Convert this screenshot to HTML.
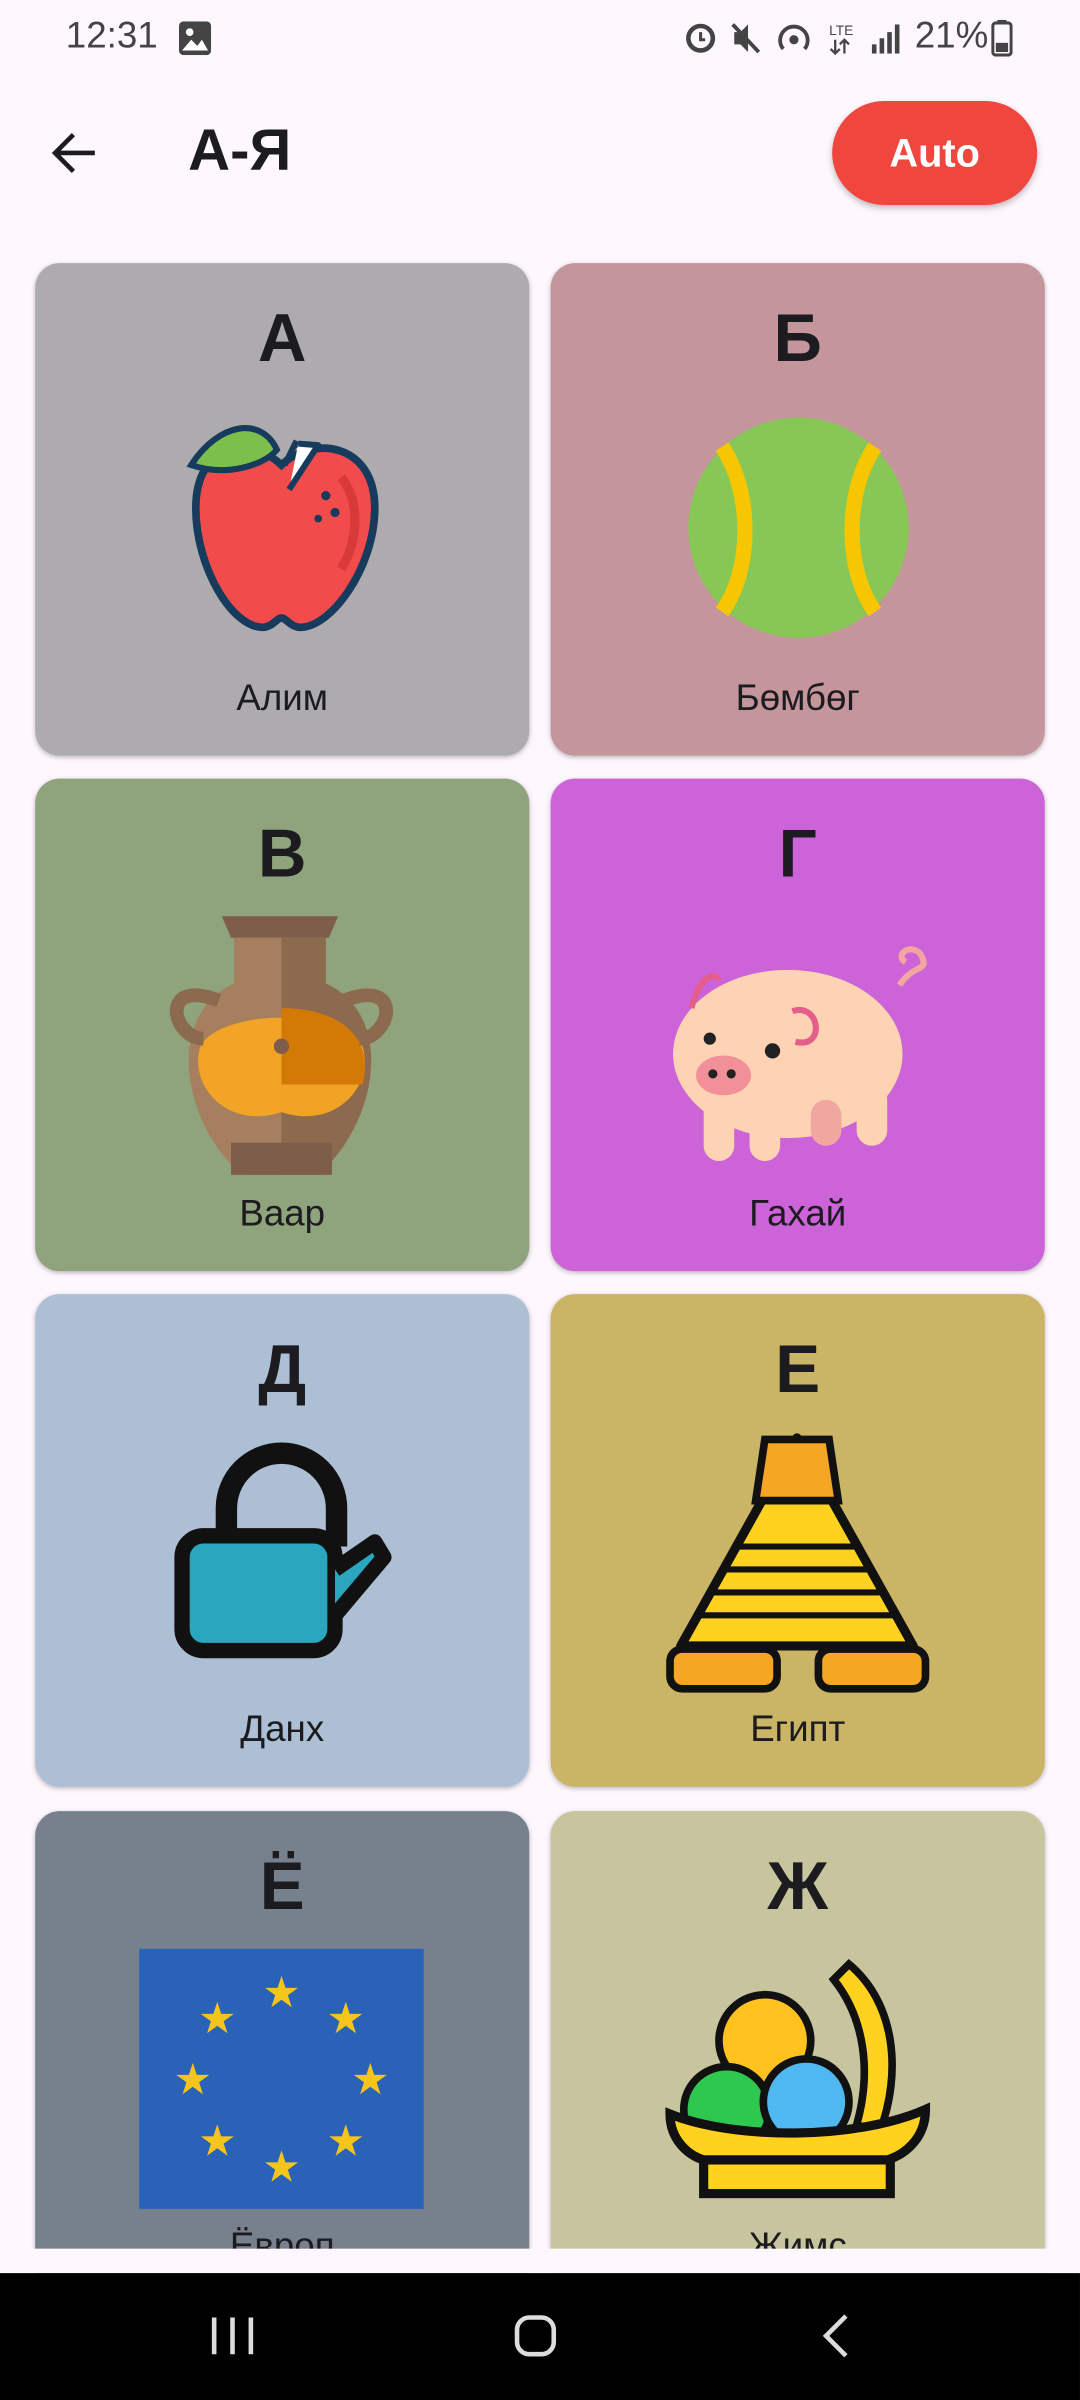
<!DOCTYPE html>
<html><head><meta charset="utf-8"><style>
html,body{margin:0;padding:0;width:1080px;height:2400px;overflow:hidden;background:#FEF7FE;font-family:"Liberation Sans",sans-serif;}
#w{position:absolute;left:0;top:0;width:706px;height:1569px;transform:scale(1.5297);transform-origin:0 0;}
.a{position:absolute;}
.card{position:absolute;width:323px;height:322px;border-radius:16px;box-shadow:0 1px 3px rgba(0,0,0,.25);overflow:hidden;}
.L{position:absolute;left:0;right:0;top:24px;text-align:center;font-weight:bold;font-size:44px;color:#1c1b1f;line-height:52px;}
.N{position:absolute;left:0;right:0;top:270px;text-align:center;font-size:24px;color:#1c1b1f;line-height:30px;}
.card svg{position:absolute;left:0;top:0;}
</style></head><body><div id="w">
<div class="a" style="left:43px;top:10px;font-size:24px;color:#444;">12:31</div>
<svg class="a" style="left:117px;top:14px" width="21" height="22"><rect x="0" y="0" width="21" height="22" rx="3" fill="#444"/><circle cx="7" cy="7" r="2.5" fill="#fff"/><path d="M2 19 L8 12 L12 16 L15 12 L19 19Z" fill="#fff"/></svg>
<svg class="a" style="left:446px;top:12px" width="150" height="26"><g fill="#444" stroke="#444"><circle cx="12" cy="13" r="8" fill="none" stroke-width="3"/><path d="M12 9v5h3" fill="none" stroke-width="2"/><path d="M34 9h4l5-5v18l-5-5h-4z" stroke="none"/><line x1="33" y1="4" x2="50" y2="22" stroke-width="2.5"/><circle cx="73" cy="14" r="3" stroke="none"/><path d="M66 20a9 9 0 1 1 14 0" fill="none" stroke-width="2.5"/><text x="96" y="11" font-size="9" stroke="none" font-family="Liberation Sans">LTE</text><path d="M100 14v9M97 20l3 3 3-3M106 23v-9M103 17l3-3 3 3" fill="none" stroke-width="1.5"/><rect x="124" y="17" width="3" height="6" stroke="none"/><rect x="129" y="13" width="3" height="10" stroke="none"/><rect x="134" y="9" width="3" height="14" stroke="none"/><rect x="139" y="4" width="3" height="19" stroke="none"/></g></svg>
<div class="a" style="left:598px;top:10px;font-size:24px;color:#444;">21%</div>
<svg class="a" style="left:648px;top:13px" width="14" height="24"><rect x="1" y="2" width="12" height="21" rx="2" fill="none" stroke="#444" stroke-width="2"/><rect x="4" y="0" width="6" height="3" fill="#444"/><rect x="3" y="15" width="8" height="6" fill="#444"/></svg>
<svg class="a" style="left:32px;top:86px" width="32" height="28"><path d="M30 14H4M16 2L4 14L16 26" fill="none" stroke="#1c1b1f" stroke-width="3"/></svg>
<div class="a" style="left:123px;top:78px;font-size:38px;font-weight:bold;color:#1c1b1f;">А-Я</div>
<div class="a" style="left:544px;top:66px;width:134px;height:68px;border-radius:34px;background:#EF463D;color:#fff;font-size:26px;font-weight:bold;text-align:center;line-height:68px;box-shadow:0 2px 4px rgba(0,0,0,.25)">Auto</div>

<div class="card" style="left:23px;top:172px;background:#AEABAE"><div class="L">А</div><div class="N">Алим</div>
<svg width="323" height="322"><path d="M161 132 C140 112 105 118 105 160 C105 200 130 240 150 238 C156 237 158 232 161 232 C164 232 166 237 172 238 C192 240 222 200 222 160 C222 118 182 112 161 132Z" fill="#F24B4B" stroke="#173B5C" stroke-width="5"/><path d="M200 140 C212 155 212 180 200 200" fill="none" stroke="#D83A3A" stroke-width="6"/><path d="M163 132 L170 118 L178 122" fill="none" stroke="#173B5C" stroke-width="4"/><path d="M172 118 L185 119 L166 148" fill="#fff" stroke="#173B5C" stroke-width="4" stroke-linejoin="round"/><path d="M158 130 C148 108 120 112 102 140 C125 148 150 140 158 130Z" transform="translate(0,-8)" fill="#7CC04B" stroke="#173B5C" stroke-width="4"/><circle cx="190" cy="152" r="3" fill="#173B5C"/><circle cx="196" cy="163" r="3" fill="#173B5C"/><circle cx="185" cy="167" r="2.5" fill="#173B5C"/></svg></div>

<div class="card" style="left:360px;top:172px;background:#C4959A"><div class="L">Б</div><div class="N">Бөмбөг</div>
<svg width="323" height="322"><circle cx="162" cy="173" r="72" fill="#86C755"/><path d="M112 120 C132 150 132 200 112 228" fill="none" stroke="#F6C600" stroke-width="10"/><path d="M212 120 C192 150 192 200 212 228" fill="none" stroke="#F6C600" stroke-width="10"/></svg></div>

<div class="card" style="left:23px;top:509px;background:#8FA37C"><div class="L">В</div><div class="N">Ваар</div>
<svg width="323" height="322"><path d="M122 90 h76 l-6 14 h-64z" fill="#7E5E4A"/><path d="M130 104 h60 v30 c45 20 35 90 -5 125 h-50 c-40 -35 -50 -105 -5 -125z" fill="#A67F5E"/><path d="M161 104 h29 v30 c45 20 35 90 -5 125 h-24z" fill="#8C6A4E"/><path d="M108 175 C100 200 125 230 161 218 C197 230 222 200 214 175 C200 150 122 150 108 175Z" fill="#F5A623" opacity=".95"/><path d="M161 150 C200 150 222 170 214 200 L161 200Z" fill="#D37A06"/><path d="M120 145 C80 130 90 170 110 170" fill="none" stroke="#8C6A4E" stroke-width="9"/><path d="M202 145 C242 130 232 170 212 170" fill="none" stroke="#8C6A4E" stroke-width="9"/><rect x="128" y="238" width="66" height="21" fill="#7E5E4A"/><circle cx="161" cy="175" r="5" fill="#7E5E4A"/></svg></div>

<div class="card" style="left:360px;top:509px;background:#CC63D8"><div class="L">Г</div><div class="N">Гахай</div>
<svg width="323" height="322"><ellipse cx="155" cy="180" rx="75" ry="55" fill="#FDD3B4"/><rect x="100" y="200" width="20" height="50" rx="10" fill="#FDD3B4"/><rect x="130" y="210" width="20" height="40" rx="10" fill="#FDD3B4"/><rect x="170" y="210" width="20" height="30" rx="10" fill="#F2A6A0"/><rect x="200" y="200" width="20" height="40" rx="10" fill="#FDD3B4"/><ellipse cx="113" cy="194" rx="18" ry="13" fill="#F2909A"/><circle cx="106" cy="193" r="3" fill="#222"/><circle cx="118" cy="193" r="3" fill="#222"/><circle cx="145" cy="178" r="5" fill="#222"/><circle cx="104" cy="170" r="4" fill="#222"/><path d="M158 152 c18 -6 22 25 2 20" fill="none" stroke="#E35E8A" stroke-width="4"/><path d="M92 150 c5 -20 15 -25 18 -18" fill="none" stroke="#E35E8A" stroke-width="4"/><path d="M228 135 c10 -15 20 -8 14 -20 c-6 -8 -18 0 -10 5" fill="none" stroke="#F2A6A0" stroke-width="4"/></svg></div>

<div class="card" style="left:23px;top:846px;background:#ADBFD4"><div class="L">Д</div><div class="N">Данх</div>
<svg width="323" height="322"><path d="M125 165 v-25 a36 36 0 0 1 72 0 v25" fill="none" stroke="#111" stroke-width="14"/><rect x="96" y="158" width="100" height="75" rx="14" fill="#2AA6BE" stroke="#111" stroke-width="10"/><path d="M196 180 L222 162 L228 172 L196 210" fill="#2AA6BE" stroke="#111" stroke-width="10" stroke-linejoin="round"/></svg></div>

<div class="card" style="left:360px;top:846px;background:#CAB466"><div class="L">Е</div><div class="N">Египт</div>
<svg width="323" height="322"><path d="M161 94 L237 230 H85Z" fill="#FFD21F" stroke="#111" stroke-width="6" stroke-linejoin="round"/><path d="M140 95 h42 l6 40 h-54z" fill="#F5A623" stroke="#111" stroke-width="5"/><g stroke="#111" stroke-width="4"><line x1="120" y1="165" x2="200" y2="165"/><line x1="112" y1="180" x2="210" y2="180"/><line x1="104" y1="195" x2="218" y2="195"/><line x1="96" y1="210" x2="228" y2="210"/></g><rect x="78" y="232" width="70" height="26" rx="8" fill="#F5A623" stroke="#111" stroke-width="5"/><rect x="175" y="232" width="70" height="26" rx="8" fill="#F5A623" stroke="#111" stroke-width="5"/></svg></div>

<div class="card" style="left:23px;top:1184px;background:#77818E"><div class="L">Ё</div><div class="N">Ёвроп</div>
<svg width="323" height="322"><rect x="68" y="90" width="186" height="170" fill="#2A62B8"/><g fill="#F6C51C" font-size="28" text-anchor="middle"><text x="161" y="128">★</text><text x="203" y="145">★</text><text x="219" y="185">★</text><text x="203" y="225">★</text><text x="161" y="242">★</text><text x="119" y="225">★</text><text x="103" y="185">★</text><text x="119" y="145">★</text></g></svg></div>

<div class="card" style="left:360px;top:1184px;background:#C7C59D"><div class="L">Ж</div><div class="N">Жимс</div>
<svg width="323" height="322"><path d="M195 100 c30 25 35 70 20 110 l-15 -5 c10 -35 5 -70 -15 -95z" fill="#FFD21F" stroke="#111" stroke-width="5"/><ellipse cx="140" cy="150" rx="30" ry="30" fill="#FFC21F" stroke="#111" stroke-width="5"/><circle cx="115" cy="195" r="28" fill="#2EC84F" stroke="#111" stroke-width="5"/><circle cx="167" cy="190" r="28" fill="#4FB8F0" stroke="#111" stroke-width="5"/><path d="M78 198 C120 215 200 215 245 195 C245 215 230 225 220 228 H100 C90 225 78 215 78 198Z" fill="#FFD21F" stroke="#111" stroke-width="6"/><rect x="100" y="228" width="122" height="22" fill="#FFD21F" stroke="#111" stroke-width="6"/></svg></div>

<div class="a" style="left:0;top:1470px;width:706px;height:16px;background:#FEF7FE"></div>
<div class="a" style="left:0;top:1486px;width:706px;height:83px;background:#000"></div>
<svg class="a" style="left:130px;top:1510px" width="450" height="34"><g stroke="#ddd" stroke-width="3" fill="none"><line x1="10" y1="5" x2="10" y2="29"/><line x1="22" y1="5" x2="22" y2="29"/><line x1="34" y1="5" x2="34" y2="29"/><rect x="208" y="5" width="24" height="24" rx="8"/><path d="M423 4 L410 17 L423 30"/></g></svg>
</div></body></html>
